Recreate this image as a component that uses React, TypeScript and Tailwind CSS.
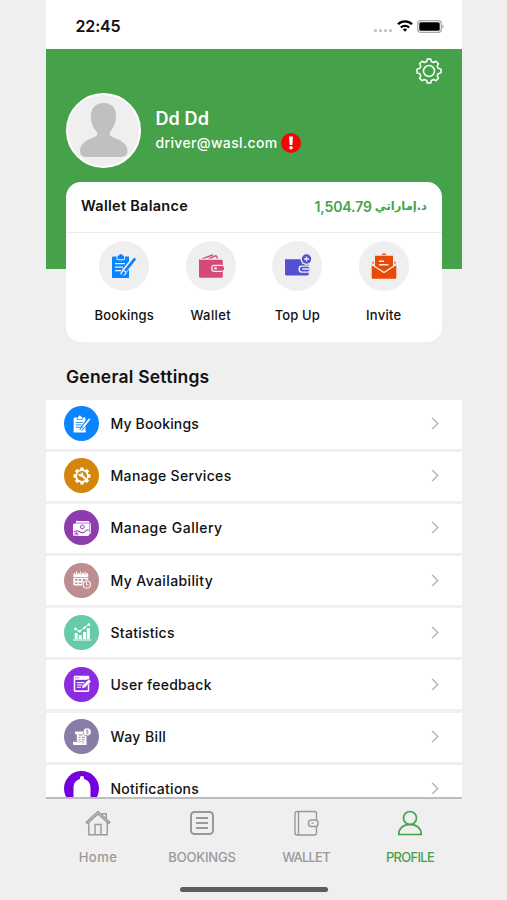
import React from "react";
import clsx from "clsx";

interface IconProps {
  className?: string;
  // colour of the gaps inside a filled glyph
  cut?: string;
}

const ClipboardIcon = ({ className, cut = "#efefef" }: IconProps) => (
  <svg viewBox="0 0 26 26" className={className} fill="currentColor">
    <path d="M2 3.5h3.5V6c0 .8.5 1.200 1.200 1.200h6.100c.8 0 1.200-.5 1.200-1.200V3.500H18V25H1V4.500a1 1 0 0 1 1-1z" />
    <path d="M6.500 6.200V3.300c0-.5.400-.8.900-.8h.8a1.600 1.600 0 0 1 3.200 0h.8c.5 0 .9.300.9.800v2.900z" />
    <path d="M4 10.700h10M4 14.200h8M4 17.700h6" stroke={cut} strokeWidth="1.300" />
    <path d="M23.500 5.500 13.700 17.800l-2.300 4.300" stroke={cut} strokeWidth="5.200" fill="none" />
    <path d="M23.200 4.600l2 1.600-9.800 12.500-2.300-1.800z" />
    <path d="M12.600 17.900l1.900 1.500-1.300 2.300-2 .5-.4-1.600z" />
    <path d="M1 22.500h17V25H1z" />
  </svg>
);

const WalletIcon = ({ className, cut = "#efefef" }: IconProps) => (
  <svg viewBox="0 0 26 26" className={className} fill="currentColor">
    <path d="M3 5.500 14.500 1.200l1.200 1-8.500 3.300z" />
    <path d="M9.500 5.500 18.200 1.800l2.200 3.700h-1.500l-1.300-1.900-4.100 1.900z" />
    <path d="M1 5.800c0 .8 1 1 2 1h20.500c.8 0 1.300.5 1.300 1.300v15.200c0 .9-.6 1.500-1.500 1.500H2.500c-.9 0-1.500-.6-1.500-1.500z" />
    <rect x="13.200" y="11.700" width="12.500" height="7.200" rx="3" fill={cut} />
    <rect x="14.500" y="12.900" width="11.500" height="4.800" rx="1.800" />
    <circle cx="17.600" cy="15.300" r="1.300" fill={cut} />
  </svg>
);

const TopUpIcon = ({ className, cut = "#efefef" }: IconProps) => (
  <svg viewBox="0 0 26 26" className={className} fill="currentColor">
    <path d="M1 6.300h22.500c.7 0 1.200.5 1.200 1.200v13.700c0 .7-.5 1.200-1.200 1.200H2.200C1.500 22.400 1 21.900 1 21.200z" />
    <rect x="14.500" y="12.400" width="12" height="7.400" rx="3" fill={cut} />
    <rect x="16" y="13.700" width="9.500" height="4.800" rx="2" />
    <rect x="18" y="15.300" width="7.500" height="1.500" rx=".7" fill={cut} />
    <circle cx="22.500" cy="6" r="6" fill={cut} />
    <circle cx="22.500" cy="6" r="4.700" />
    <path d="M22.500 3.400v5.200M19.900 6h5.200" stroke={cut} strokeWidth="1.300" />
  </svg>
);

const InviteIcon = ({ className, cut = "#efefef" }: IconProps) => (
  <svg viewBox="0 0 26 26" className={className} fill="currentColor">
    <path d="M10.500 2 13 0l2.500 2z" />
    <path d="M4 2.700h18v11l-9 6-9-6z" />
    <path d="M8 8.300h5M8 11.800h9.500" stroke={cut} strokeWidth="1.400" />
    <path d="M2.600 8.300v3L.8 9.700zM23.400 8.300v3l1.800-1.600z" />
    <path d="M.7 11.800 13 20l12.300-8.200v13c0 .5-.4.900-.9.900H1.600c-.5 0-.9-.4-.9-.9z" />
    <path d="M.7 11.500 13 19.500l12.300-8" stroke={cut} strokeWidth="1.400" fill="none" />
  </svg>
);

const ServiceIcon = ({ className, cut }: IconProps) => (
  <svg viewBox="0 0 26 26" className={className} fill="currentColor">
    <circle cx="13" cy="13" r="9.700" />
    <path
      d="M13 .8v24.400M.8 13h24.400M4.400 4.400l17.200 17.200M21.600 4.400 4.400 21.600"
      stroke="currentColor"
      strokeWidth="5"
    />
    <circle cx="13" cy="13" r="7.300" fill={cut} />
    <path d="M10 9.300l9 8.700" stroke="currentColor" strokeWidth="3.200" strokeLinecap="round" />
    <path
      d="M8.300 10.600a3 3 0 0 0 4.100 1.900 3 3 0 0 0 .6-4.300"
      stroke="currentColor"
      strokeWidth="2"
      fill="none"
    />
    <path d="M7.800 7.200l3.200 3" stroke={cut} strokeWidth="2.200" />
  </svg>
);

const GalleryIcon = ({ className, cut }: IconProps) => (
  <svg viewBox="0 0 26 26" className={className} fill="currentColor">
    <path d="M4.500 2.500 23.500 4v1.500L4.500 4.700z" />
    <rect x="4.500" y="3" width="19" height="8" rx="1.500" />
    <rect x="5" y="5.500" width="21" height="16" rx="2" />
    <rect x="0" y="6.500" width="23.500" height="18" rx="2" />
    <path d="M5 5.800h18.300a1 1 0 0 1 1 1v13" stroke={cut} strokeWidth="1" fill="none" />
    <circle cx="13.500" cy="11.500" r="2.700" stroke={cut} strokeWidth="1.400" fill="none" />
    <path d="M1 19c4-4 6-2 8.500-.5S15 21 17.500 18s4-3 5.500-2" stroke={cut} strokeWidth="1.500" fill="none" />
    <path d="M3 24v-3l2-1.500L7 21v3M5 19v4" stroke={cut} strokeWidth="1.200" fill="none" />
  </svg>
);

const CalendarIcon = ({ className, cut }: IconProps) => (
  <svg viewBox="0 0 26 26" className={className} fill="currentColor">
    <path d="M2.500 3H20a2 2 0 0 1 2 2v4H.5V5a2 2 0 0 1 2-2z" />
    <path d="M5 .5v5M11.200.5v5M17.500.5v5" stroke={cut} strokeWidth="3.200" />
    <path d="M5 1v4M11.200 1v4M17.500 1v4" stroke="currentColor" strokeWidth="1.500" strokeLinecap="round" />
    <path d="M.5 10H22v11H2.500a2 2 0 0 1-2-2z" />
    <path d="M3 12.700h3.500M8.500 12.700H12M14 12.700h4M3 17.700h3.500M8.500 17.700H12" stroke={cut} strokeWidth="2.500" />
    <circle cx="20" cy="19.500" r="7" fill={cut} />
    <circle cx="20" cy="19.500" r="5.200" fill="none" stroke="currentColor" strokeWidth="1.500" />
    <path d="M19.500 16v4h3" fill="none" stroke="currentColor" strokeWidth="1.400" />
  </svg>
);

const StatisticsIcon = ({ className }: IconProps) => (
  <svg viewBox="0 0 26 26" className={className} fill="currentColor">
    <path d="M0 23.800h26v1.500H0zM2.500 14.500h4.200v8.500H2.500zM8.500 17.500h4.200V23H8.500zM14.500 13h4.200v10h-4.200zM20 7.500h4.200V23H20z" />
    <path d="M3.500 8.500 9.500 12l7-5.500L23 2" fill="none" stroke="currentColor" strokeWidth="1.400" />
    <circle cx="3.500" cy="8.500" r="1.900" />
    <circle cx="9.500" cy="12" r="1.900" />
    <circle cx="16.500" cy="6.800" r="1.900" />
    <circle cx="23" cy="2.300" r="1.900" />
  </svg>
);

const FeedbackIcon = ({ className, cut }: IconProps) => (
  <svg viewBox="0 0 26 26" className={className} fill="currentColor">
    <rect x="1" y="1" width="22.500" height="23.500" rx="2" />
    <path d="M3.300 7h18v15.200h-18z" fill={cut} />
    <path d="M3 4h2M6.500 4h2" stroke={cut} strokeWidth="1.400" />
    <path d="M5.500 11h13M5.500 14.300h10M5.500 17.600h6" stroke="currentColor" strokeWidth="1.500" />
    <path d="M24 7.500 15 17" stroke={cut} strokeWidth="6" />
    <path d="M22.800 6.500l3.200 3-9 8.500-4 1 1-4z" />
  </svg>
);

const WayBillIcon = ({ className, cut }: IconProps) => (
  <svg viewBox="0 0 26 26" className={className} fill="currentColor">
    <path d="M5.500 5h14v19.500H5.500zM3 5h3v4H3z" />
    <path d="M0 20h14.500v2.500c0 1.500 1 2 2 2H2c-1.500 0-2-1.500-2-3z" />
    <path d="M4.500 20h10.300v3" stroke={cut} strokeWidth=".8" fill="none" />
    <path d="M8 10h6M8 13.500h3M13 13.500h4M8 17h3M13 17h4" stroke={cut} strokeWidth="1.400" />
    <circle cx="20.500" cy="5.500" r="6.300" fill={cut} />
    <circle cx="20.500" cy="5.500" r="5.300" />
    <path d="M22.300 3.700c-1-1-3.300-.8-3.300.6s3.200 1 3.200 2.500-2.400 1.700-3.500.6M20.500 2v7" stroke={cut} strokeWidth=".9" fill="none" />
  </svg>
);

const BellIcon = ({ className }: IconProps) => (
  <svg viewBox="2 2 22 22" className={className} fill="currentColor">
    <path d="M13 0c1.300 0 2 .8 2 2v1c4 1 6.500 4.400 6.500 8.700V21c0 1 .8 2 2 3h-21c1.200-1 2-2 2-3v-9.300C4.500 7.400 7 4 11 3V2c0-1.200.7-2 2-2z" />
    <path d="M10 25.500h6a3 3 0 0 1-6 0z" />
  </svg>
);

const actions = [
  { label: "Bookings", Icon: ClipboardIcon, color: "text-[#0a84ff]", text: "tracking-[0.25px]" },
  { label: "Wallet", Icon: WalletIcon, color: "text-[#d44b7b]", text: "tracking-[0.4px]" },
  { label: "Top Up", Icon: TopUpIcon, color: "text-[#5550d2]", text: "tracking-[0.1px]" },
  { label: "Invite", Icon: InviteIcon, color: "text-[#ea4a05]", text: "tracking-[0.3px]" },
];

const settings = [
  { label: "My Bookings", Icon: ClipboardIcon, bg: "bg-[#0a84ff]", cut: "#0a84ff", text: "tracking-[0.15px]" },
  { label: "Manage Services", Icon: ServiceIcon, bg: "bg-[#d4860b]", cut: "#d4860b", text: "tracking-[0.33px]" },
  { label: "Manage Gallery", Icon: GalleryIcon, bg: "bg-[#8d3cad]", cut: "#8d3cad", text: "tracking-[0.5px]" },
  { label: "My Availability", Icon: CalendarIcon, bg: "bg-[#be8d90]", cut: "#be8d90", text: "tracking-[0.38px]" },
  { label: "Statistics", Icon: StatisticsIcon, bg: "bg-[#65cba9]", cut: "#65cba9", text: "tracking-[0.27px]" },
  { label: "User feedback", Icon: FeedbackIcon, bg: "bg-[#8a2be0]", cut: "#8a2be0", text: "tracking-[0.25px]" },
  { label: "Way Bill", Icon: WayBillIcon, bg: "bg-[#897ca5]", cut: "#897ca5", text: "tracking-[0.4px]" },
  { label: "Notifications", Icon: BellIcon, bg: "bg-[#7400e0]", cut: "#7400e0", text: "tracking-[0.27px]", size: "h-[22px] w-[22px]" },
];

const HomeTab = () => (
  <>
    <path d="M1.200 12.200 13 1.500l11.800 10.700-1.200 1.300L13 4 2.400 13.500z" />
    <path d="M3.800 12.500v12.300h18.400V12.500M10 24.500v-10h6v10M17.300 5V3.700h4v5" />
  </>
);

const BookingsTab = () => (
  <>
    <rect x="2" y="2" width="22" height="22" rx="3.500" strokeWidth="2" />
    <path d="M7 8h12M7 13h12M7 18h12" strokeWidth="2" />
  </>
);

const WalletTab = () => (
  <>
    <rect x="2" y="1.500" width="21.500" height="23.500" rx="2" />
    <path d="M5.500 1.500V25" />
    <rect x="15.500" y="10" width="9.500" height="6.500" rx="2.800" fill="#efefef" />
    <path d="M18.500 13.200h2" />
  </>
);

const ProfileTab = () => (
  <>
    <circle cx="13" cy="8" r="6.500" strokeWidth="1.700" />
    <path d="M1.700 24.500c0-6.300 4.500-10.200 11.300-10.200s11.300 3.900 11.300 10.200z" strokeWidth="1.700" />
  </>
);

const tabs = [
  { label: "Home", Icon: HomeTab, text: "tracking-[0.5px]" },
  { label: "BOOKINGS", Icon: BookingsTab, text: "tracking-[-0.2px]" },
  { label: "WALLET", Icon: WalletTab, text: "tracking-[-0.8px]" },
  { label: "PROFILE", Icon: ProfileTab, text: "tracking-[-0.7px]", active: true },
];

const StatusBar = () => (
  <div className="flex h-[49px] shrink-0 items-center justify-between bg-white pt-[3px] pr-[18px] pl-[29.500px]">
    <span className="text-[16px] font-semibold tracking-[-0.150px]">22:45</span>
    <div className="flex items-center">
      <div className="mt-[8px] mr-[5px] flex gap-[2px]">
        {[0, 1, 2, 3].map((dot) => (
          <span key={dot} className="h-[3px] w-[3px] rounded-full bg-[#bdbdbd]" />
        ))}
      </div>
      <svg viewBox="0 0 16 12" className="mr-[4px] h-[12px] w-[16px]" fill="none" stroke="#000" strokeWidth="2.300">
        <path d="M1 4.200a10 10 0 0 1 14 0M3.800 7.500a6 6 0 0 1 8.400 0" />
        <path d="M8 11.800 5.900 9.500a3 3 0 0 1 4.200 0z" fill="#000" stroke="none" />
      </svg>
      <svg viewBox="0 0 27 13" className="h-[13px] w-[27px]">
        <rect x=".7" y=".7" width="23.600" height="11.600" rx="3" fill="#fff" stroke="#aaa" strokeWidth="1.300" />
        <rect x="2.300" y="2.200" width="20.400" height="8.600" rx="1.500" />
        <path d="M25.300 4.500q1.500.6 1.500 2t-1.500 2z" fill="#aaa" />
      </svg>
    </div>
  </div>
);

const ProfileHeader = () => (
  <header className="h-[220px] shrink-0 bg-[#46a24a] pl-[20px]">
    <div className="flex h-[44px] justify-end pt-[9px] pr-[20px]">
      <svg viewBox="0 0 26 26" className="h-[26px] w-[26px]" fill="none" stroke="#fff" strokeWidth="1.500" strokeLinejoin="round">
        <path d="M10.700 3.500 11.300 1h3.400l.6 2.500 2.400 1 2.200-1.300 2.600 2.500-1.300 2.300.9 2.300 2.900.8v3.800l-2.900.8-.9 2.200 1.300 2.300-2.600 2.500-2.200-1.200-2.400 1-.6 2.500h-3.400l-.6-2.500-2.400-1-2.200 1.200-2.600-2.500 1.300-2.300-.9-2.200L1 14.900v-3.800l2.900-.8.9-2.300-1.300-2.300 2.600-2.500 2.200 1.300z" />
        <circle cx="13" cy="13" r="5.500" />
      </svg>
    </div>
    <div className="flex">
      <div className="h-[75px] w-[75px] overflow-hidden rounded-full border-2 border-white bg-[#efefef]">
        <svg viewBox="0 0 71 71" className="h-full w-full" fill="#c0c0c0">
          <path d="M35.500 8C44 8 48.500 13.500 48 22c-.4 7-3 11-5.500 14.500-1.500 2.500-1 4 2 5.500 7 3 15 5.500 15 14 0 4.500-3 6-8 6h-32c-5 0-7.500-1.500-7.500-6 0-8.500 7.500-11 14.500-14 3-1.500 3.500-3 2-5.500C25.500 33 23 29 22.900 22 22.700 13.500 27 8 35.500 8z" />
        </svg>
      </div>
      <div className="pt-[14px] pl-[14.500px] text-white">
        <h1 className="text-[18px] leading-[24px] font-semibold tracking-[0.1px]">Dd Dd</h1>
        <div className="flex h-[22px] items-center">
          <span className="text-[14px] font-medium tracking-[0.350px]">driver@wasl.com</span>
          <svg viewBox="0 0 20 20" className="mt-[2px] ml-[3px] h-[20px] w-[20px]">
            <circle cx="10" cy="10" r="10" fill="#fb0207" />
            <path d="M8 3.500h4L11.300 12H8.700z" fill="#fff" />
            <circle cx="10" cy="14.800" r="1.800" fill="#fff" />
          </svg>
        </div>
      </div>
    </div>
  </header>
);

const WalletCard = () => (
  <section className="relative mx-[20px] -mt-[87.500px] h-[160.500px] shrink-0 rounded-[15px] bg-white">
    <div className="flex h-[51.500px] items-center justify-between border-b border-[#ececec] px-[15px] pb-px text-[14px] font-semibold">
      <h2 className="text-[14.500px] tracking-[0.280px]">Wallet Balance</h2>
      <div className="flex items-center gap-[3px] text-[#46a24a]">
        <span className="tracking-[-0.1px]">1,504.79</span>
        <span dir="rtl" className="font-['DejaVu_Sans'] text-[11.500px] font-bold">د.إماراتي</span>
      </div>
    </div>
    <div className="grid grid-cols-4 px-[15px] pt-[7.500px]">
      {actions.map(({ label, Icon, color, text }) => (
        <div key={label} className="flex flex-col items-center">
          <div className="flex h-[50px] w-[50px] items-center justify-center rounded-full bg-[#efefef]">
            <Icon className={clsx("h-[26px] w-[26px] overflow-visible", color)} />
          </div>
          <span className={clsx("mt-[14px] text-[13px] leading-[20px] font-medium whitespace-nowrap", text)}>{label}</span>
        </div>
      ))}
    </div>
  </section>
);

const SettingsList = () => (
  <section className="flex min-h-0 flex-1 flex-col">
    <h2 className="h-[57.500px] shrink-0 pt-[22px] pl-[20px] text-[17.500px] leading-[26px] font-semibold tracking-[0.230px]">General Settings</h2>
    <ul className="flex min-h-0 flex-1 flex-col gap-[3.200px] overflow-hidden">
      {settings.map(({ label, Icon, bg, cut, text, size }) => (
        <li key={label} className="flex h-[49px] shrink-0 items-center bg-white pr-[23px] pb-px pl-[18px]">
          <div className={clsx("flex h-[35px] w-[35px] items-center justify-center rounded-full text-white", bg)}>
            <Icon className={clsx("overflow-visible", size ?? "h-[18px] w-[18px]")} cut={cut} />
          </div>
          <span className={clsx("ml-[11.500px] flex-1 text-[14px] font-medium", text)}>{label}</span>
          <svg viewBox="0 0 8 14" className="h-[13px] w-[8px]" fill="none" stroke="#b5b5b5" strokeWidth="1.500">
            <path d="M1 1l6 6-6 6" />
          </svg>
        </li>
      ))}
    </ul>
  </section>
);

const TabBar = () => (
  <nav className="relative h-[103px] shrink-0 border-t-2 border-[#bdbdbd] bg-[#efefef]">
    <div className="grid grid-cols-4 pt-[11px]">
      {tabs.map(({ label, Icon, text, active }) => (
        <div key={label} className={clsx("flex flex-col items-center", active ? "text-[#46a24a]" : "text-[#999]")}>
          <svg viewBox="0 0 26 26" className="h-[26px] w-[26px]" fill="none" stroke="currentColor" strokeWidth="1.400">
            <Icon />
          </svg>
          <span className={clsx("mt-[11px] text-[13px] leading-[20px] font-medium", text)}>{label}</span>
        </div>
      ))}
    </div>
    <div className="mx-auto mt-[20px] h-[5px] w-[148px] rounded-full bg-[#5c5c5c]" />
  </nav>
);

export default function App() {
  return (
    <div className="h-[900px] w-[507px] overflow-hidden bg-[#efefef] pl-[46px] font-['Inter','Noto_Sans',sans-serif] text-[#111]">
      <main className="flex h-full w-[416px] flex-col">
        <StatusBar />
        <ProfileHeader />
        <WalletCard />
        <SettingsList />
        <TabBar />
      </main>
    </div>
  );
}
